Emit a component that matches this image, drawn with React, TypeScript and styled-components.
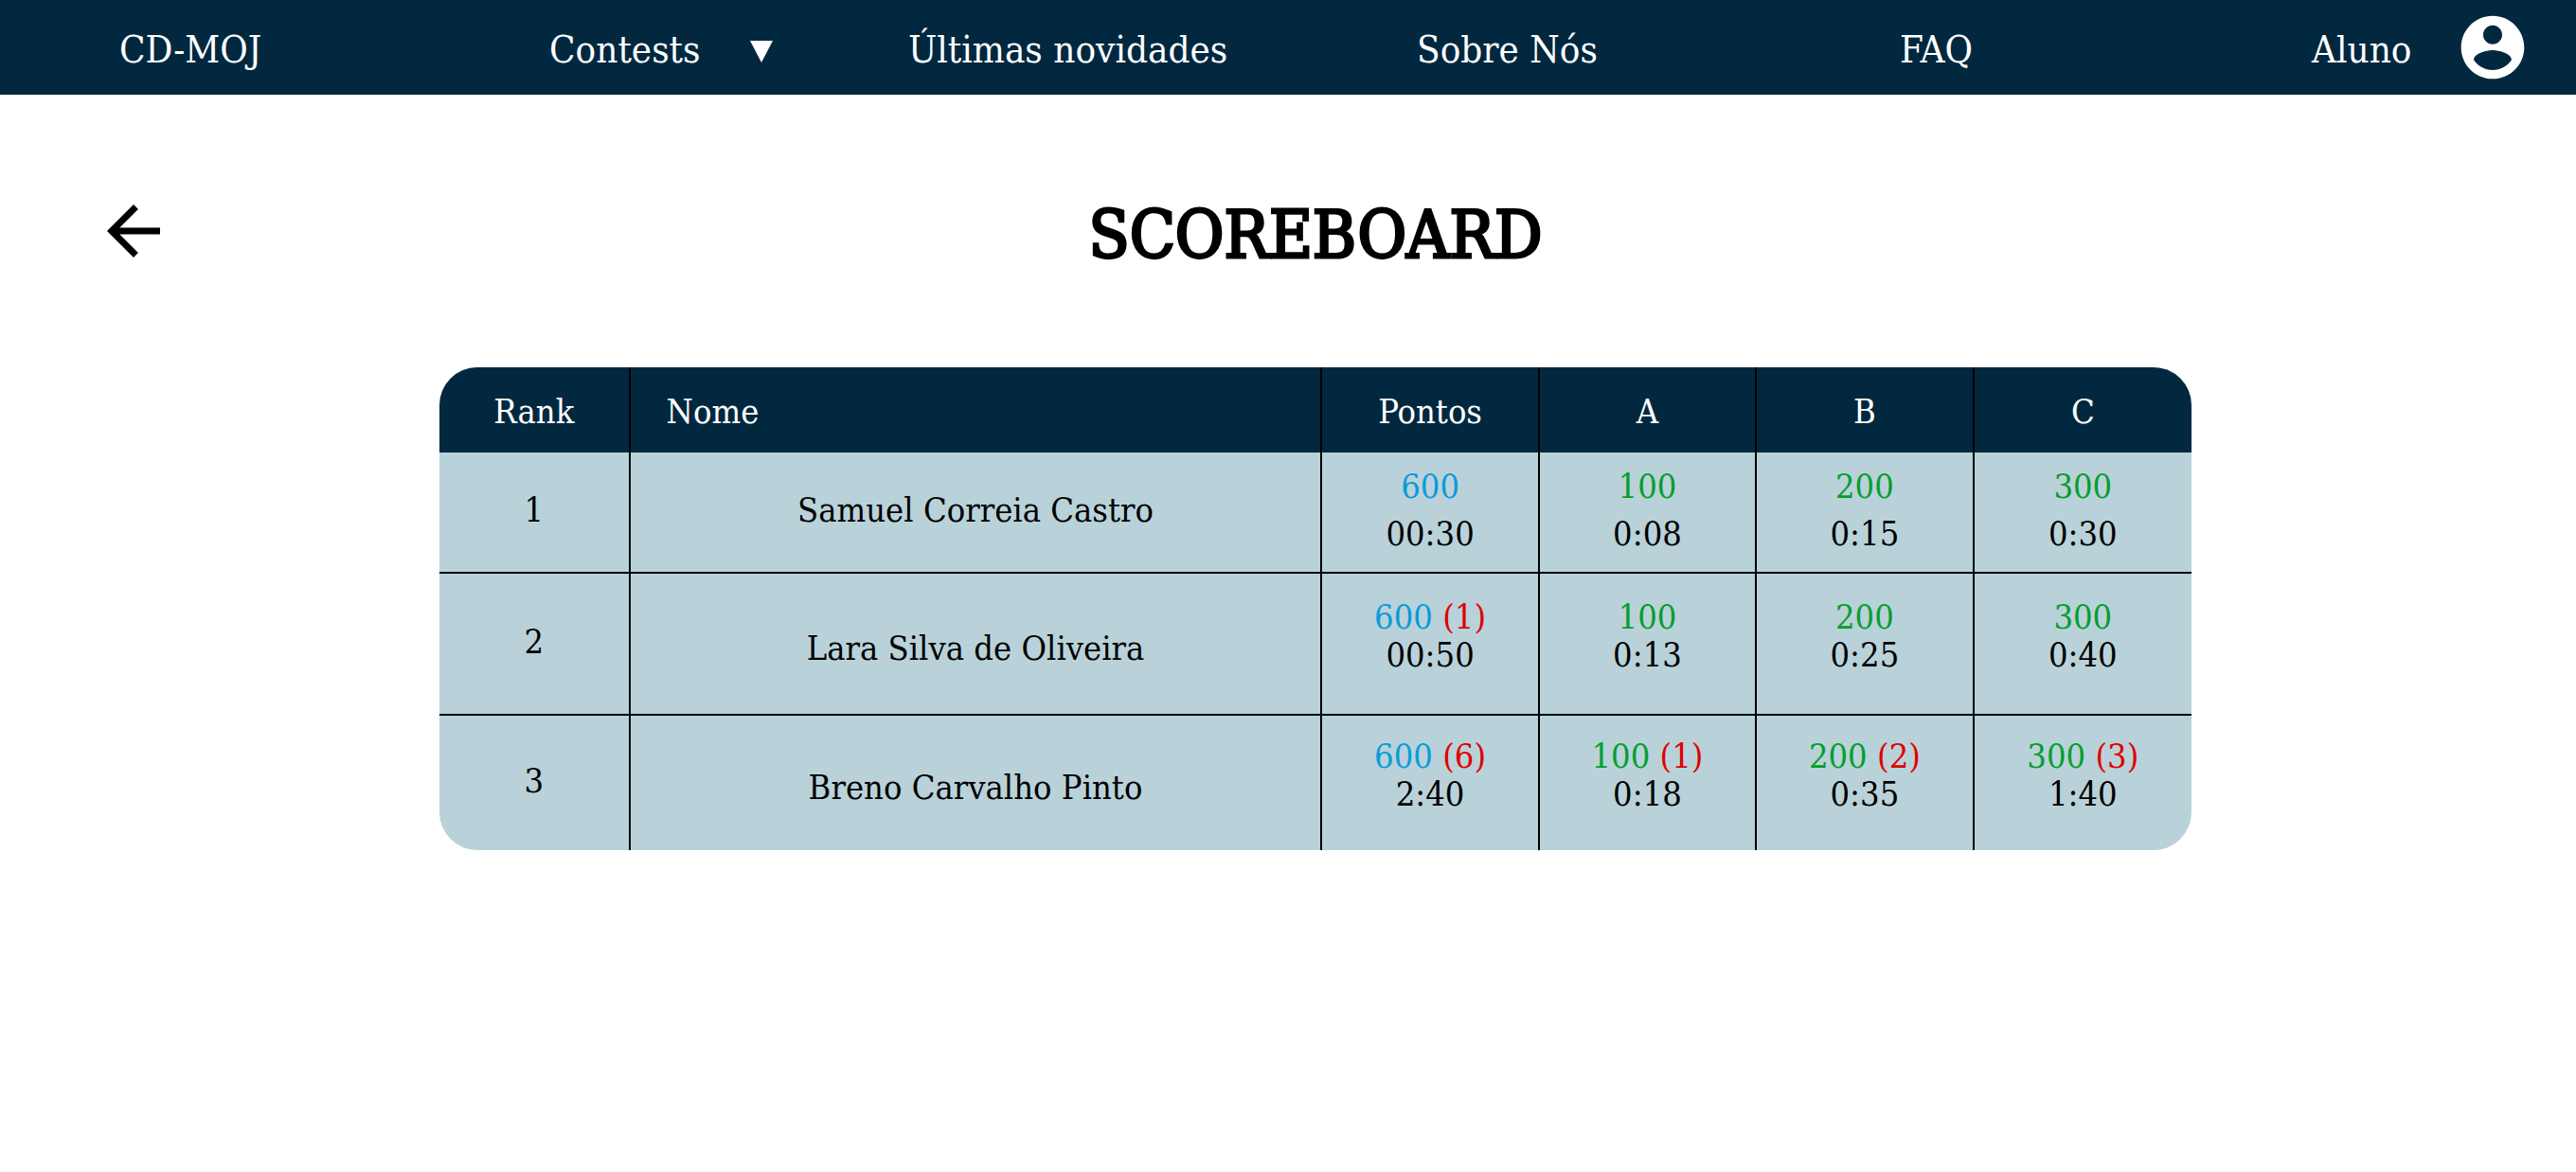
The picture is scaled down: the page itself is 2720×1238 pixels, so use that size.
import React from "react";
import styled, { createGlobalStyle } from "styled-components";

const NAVY = "#022840";
const PALE = "#b9d2d9";
const SLAB = `"Roboto Slab", "DejaVu Serif Condensed", "DejaVu Serif", serif`;

const GlobalStyle = createGlobalStyle`
  *, *::before, *::after { box-sizing: border-box; }
  body { margin: 0; background: #fff; color: #000; font-family: ${SLAB}; }
`;

const NavBar = styled.nav`
  display: grid;
  grid-template-columns: 454fr 379fr 537fr 510fr 435fr 231fr;
  align-items: center;
  height: 100px;
  padding: 0 48px 0 126px;
  background: ${NAVY};
`;

const NavLink = styled.a`
  display: flex;
  align-items: center;
  justify-self: start;
  color: #fff;
  font-size: 40px;
  line-height: 48px;
  white-space: nowrap;
  text-decoration: none;
`;

const NavMenu = styled.button`
  display: flex;
  align-items: center;
  justify-self: start;
  gap: 52px;
  padding: 0;
  border: 0;
  background: none;
  color: #fff;
  font: inherit;
  font-size: 40px;
  line-height: 48px;
  cursor: pointer;
`;

const Label = styled.span`
  padding-top: 4px;
`;

const Account = styled(NavLink)`
  justify-content: space-between;
  justify-self: stretch;
`;

const Icon = styled.svg<{ $size: number }>`
  display: block;
  width: ${(p) => p.$size}px;
  height: ${(p) => p.$size}px;
  fill: currentColor;
  overflow: visible;
`;

const Main = styled.main`
  padding: 96px 0 96px 58px;
`;

const Heading = styled.header`
  display: grid;
  grid-template-columns: 1fr auto 1fr;
  align-items: center;
  margin-bottom: 96px;
`;

const BackButton = styled.button`
  justify-self: start;
  margin: 0 0 0 41px;
  padding: 0;
  border: 0;
  background: none;
  color: #000;
  cursor: pointer;
`;

const Title = styled.h1`
  margin: 0;
  padding-top: 8px;
  font-size: 70px;
  font-weight: 400;
  line-height: 88px;
  -webkit-text-stroke: 3px currentColor;
`;

const Board = styled.table`
  width: 69.5%;
  margin: 0 auto;
  table-layout: fixed;
  border-spacing: 0;
  border-radius: 40px;
  overflow: hidden;
  background: ${PALE};
  font-size: 36px;
  line-height: 40px;
  text-align: center;
`;

const Column = styled.col<{ $share: number }>`
  width: ${(p) => p.$share}%;
`;

const HeadCell = styled.th<{ $left?: boolean }>`
  height: 90px;
  padding: 4px 38px 0;
  border-right: 2px solid #000;
  background: ${NAVY};
  color: #fff;
  font-weight: 400;
  text-align: ${(p) => (p.$left ? "left" : "center")};
  &:last-child { border-right: 0; }
`;

const Row = styled.tr<{ $height: number; $roomy: boolean }>`
  height: ${(p) => p.$height}px;
  line-height: ${(p) => (p.$roomy ? 50 : 40)}px;
`;

const Cell = styled.td`
  padding: 0 0 4px;
  border-right: 2px solid #000;
  border-bottom: 2px solid #000;
  &:last-child { border-right: 0; }
  tr:last-child > & { border-bottom: 0; }
`;

const NameCell = styled(Cell)<{ $roomy: boolean }>`
  padding: ${(p) => (p.$roomy ? "0 0 4px" : "10px 0 0")};
`;

const ScoreCell = styled(Cell)<{ $roomy: boolean }>`
  padding: 0 0 ${(p) => (p.$roomy ? 4 : 16)}px;
`;

const Points = styled.div<{ $total?: boolean }>`
  color: ${(p) => (p.$total ? "#0a9bdc" : "#049e2f")};
`;

const Penalty = styled.span`
  color: #e00000;
`;

type Score = { points: number; tries?: number; time: string };
type Entry = { rank: number; name: string; height: number; scores: Score[] };

const entries: Entry[] = [
  {
    rank: 1,
    name: "Samuel Correia Castro",
    height: 128,
    scores: [
      { points: 600, time: "00:30" },
      { points: 100, time: "0:08" },
      { points: 200, time: "0:15" },
      { points: 300, time: "0:30" },
    ],
  },
  {
    rank: 2,
    name: "Lara Silva de Oliveira",
    height: 150,
    scores: [
      { points: 600, tries: 1, time: "00:50" },
      { points: 100, time: "0:13" },
      { points: 200, time: "0:25" },
      { points: 300, time: "0:40" },
    ],
  },
  {
    rank: 3,
    name: "Breno Carvalho Pinto",
    height: 142,
    scores: [
      { points: 600, tries: 6, time: "2:40" },
      { points: 100, tries: 1, time: "0:18" },
      { points: 200, tries: 2, time: "0:35" },
      { points: 300, tries: 3, time: "1:40" },
    ],
  },
];

const shares = [10.9, 39.5, 12.4, 12.4, 12.4, 12.4];

export default function App() {
  return (
    <>
      <GlobalStyle />
      <NavBar>
        <NavLink href="#inicio"><Label>CD-MOJ</Label></NavLink>
        <NavMenu type="button" aria-haspopup="menu">
          <Label>Contests</Label>
          <Icon $size={24} viewBox="0 0 24 24" aria-hidden="true">
            <path d="M0 5h24L12 28z" />
          </Icon>
        </NavMenu>
        <NavLink href="#novidades"><Label>Últimas novidades</Label></NavLink>
        <NavLink href="#sobre"><Label>Sobre Nós</Label></NavLink>
        <NavLink href="#faq"><Label>FAQ</Label></NavLink>
        <Account href="#conta">
          <Label>Aluno</Label>
          <Icon $size={80} viewBox="0 0 24 24" aria-hidden="true">
            <path d="M12 2C6.48 2 2 6.48 2 12s4.48 10 10 10 10-4.48 10-10S17.52 2 12 2zm0 3c1.66 0 3 1.34 3 3s-1.34 3-3 3-3-1.34-3-3 1.34-3 3-3zm0 14.2c-2.5 0-4.71-1.28-6-3.22.03-1.99 4-3.08 6-3.08 1.99 0 5.97 1.09 6 3.08-1.29 1.94-3.5 3.22-6 3.22z" />
          </Icon>
        </Account>
      </NavBar>
      <Main>
        <Heading>
          <BackButton type="button" aria-label="Voltar">
            <Icon $size={84} viewBox="0 0 24 24" aria-hidden="true">
              <path d="M20 11H7.83l5.59-5.59L12 4l-8 8 8 8 1.41-1.41L7.83 13H20v-2z" />
            </Icon>
          </BackButton>
          <Title>SCOREBOARD</Title>
        </Heading>
        <Board>
          <colgroup>
            {shares.map((share, i) => (
              <Column key={i} $share={share} />
            ))}
          </colgroup>
          <thead>
            <tr>
              <HeadCell scope="col">Rank</HeadCell>
              <HeadCell scope="col" $left>Nome</HeadCell>
              <HeadCell scope="col">Pontos</HeadCell>
              <HeadCell scope="col">A</HeadCell>
              <HeadCell scope="col">B</HeadCell>
              <HeadCell scope="col">C</HeadCell>
            </tr>
          </thead>
          <tbody>
            {entries.map((entry, index) => {
              const roomy = index === 0;
              return (
                <Row key={entry.rank} $height={entry.height} $roomy={roomy}>
                  <Cell>{entry.rank}</Cell>
                  <NameCell $roomy={roomy}>{entry.name}</NameCell>
                  {entry.scores.map((score, i) => (
                    <ScoreCell key={i} $roomy={roomy}>
                      <Points $total={i === 0}>
                        {score.points}
                        {score.tries && <Penalty> ({score.tries})</Penalty>}
                      </Points>
                      {score.time}
                    </ScoreCell>
                  ))}
                </Row>
              );
            })}
          </tbody>
        </Board>
      </Main>
    </>
  );
}
